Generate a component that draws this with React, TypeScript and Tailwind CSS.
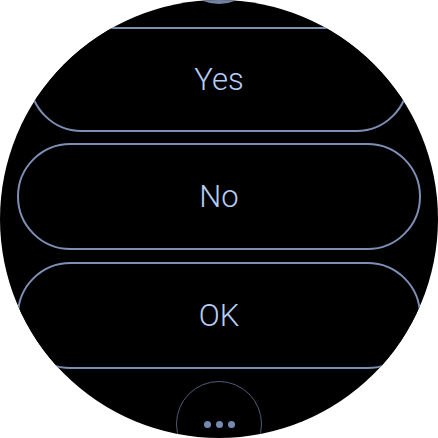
import React from 'react';

const labels = ['Yes', 'No', 'OK'];

const PillButton: React.FC<{ label: string; className: string }> = ({ label, className }) => (
    <button
        className={`shrink-0 flex items-center justify-center rounded-full border-2 border-[#7d8fb5] bg-black text-[#b6cdf8] text-[31px] font-light leading-none ${className}`}
    >
        {label}
    </button>
);

const App: React.FC = () => {
    return (
        <div className="w-[438px] h-[438px] bg-white" style={{ fontFamily: 'Roboto, "Noto Sans", sans-serif' }}>
            <div className="relative w-[438px] h-[438px] rounded-full bg-black overflow-hidden">
                <div className="flex flex-col items-center">
                    {/* previous item, scrolled almost out of view */}
                    <div className="shrink-0 w-[86px] h-[86px] -mt-[82px] rounded-full bg-[#74829f]" />

                    <PillButton label={labels[0]} className="mt-[23px] w-[380px] h-[105px]" />
                    <PillButton label={labels[1]} className="mt-[11px] w-[404px] h-[107px]" />
                    <PillButton label={labels[2]} className="mt-[12px] w-[404px] h-[107px]" />

                    {/* more options */}
                    <button className="shrink-0 mt-[12px] w-[86px] h-[86px] rounded-full border border-[#4d5b78] flex items-center justify-center gap-[5px]">
                        <span className="w-[7px] h-[7px] rounded-full bg-[#7689b2]" />
                        <span className="w-[7px] h-[7px] rounded-full bg-[#7689b2]" />
                        <span className="w-[7px] h-[7px] rounded-full bg-[#7689b2]" />
                    </button>
                </div>
            </div>
        </div>
    );
};

export default App;
